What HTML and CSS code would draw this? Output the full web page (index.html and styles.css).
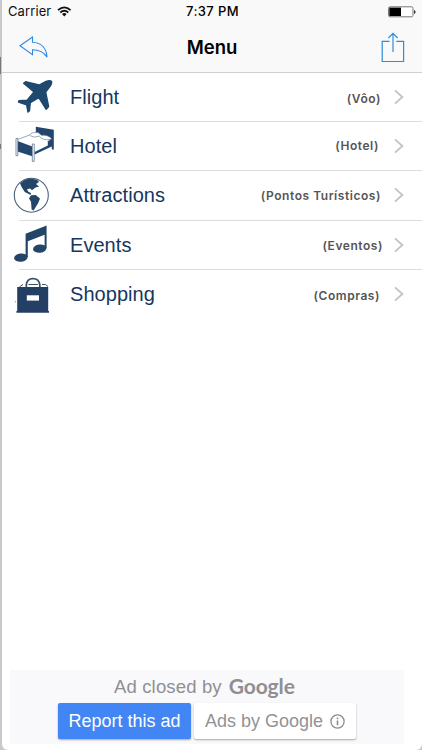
FILE: index.html
```html
<!DOCTYPE html>
<html lang="en">
<head>
<meta charset="utf-8">
<title>Menu</title>
<link rel="stylesheet" href="styles.css">
</head>
<body>
<div class="screen">
  <header class="header">
    <div class="status">
      <div class="carrier"><span class="carrier-name">Carrier</span>
        <svg width="15" height="11" viewBox="0 0 15 11"><g fill="none" stroke="#111" stroke-width="1.8"><path d="M1 4.2Q7.3-1.4 13.6 4.2M3.3 6.5Q7.3 3 11.3 6.5"/></g><path d="M5 8Q7.3 6.2 9.6 8L7.3 10.4Z" fill="#111"/></svg>
      </div>
      <div class="time">7:37 PM</div>
      <svg class="battery" width="28" height="12" viewBox="0 0 28 12"><rect x=".5" y=".8" width="24.5" height="10" rx="1.6" fill="#fff" stroke="#777"/><path d="M1.3 1.6H13V10H1.3Z" fill="#000"/><path d="M26 4V8Q27.6 7.5 27.6 6T26 4Z" fill="#333"/></svg>
    </div>
    <nav class="nav">
      <svg class="back" width="30" height="23" viewBox="0 0 30 23"><path d="M1 9.7 13.5 1V6.2C22 6.6 27.5 12 28 21.3 24.5 15.5 20 13.8 13.5 13.8V18.6Z" fill="none" stroke="#2d8be0" stroke-width="1.1"/></svg>
      <h1 class="title">Menu</h1>
      <svg class="share" width="24" height="31" viewBox="0 0 24 31"><path d="M8.5 9.3H1.2V29.5H22.6V9.3H15.3M12 20V1.3M7.4 6 12 1.3 16.6 6" fill="none" stroke="#2d8be0" stroke-width="1.2"/></svg>
    </nav>
  </header>
  <main class="list">
    <a class="row flight">
      <svg class="icon" viewBox="2 73 60 49"><path d="M23.6 83.2 25.6 81.8 39 85 46 81.4Q50 80.2 51.5 81.4 52.2 83.6 49.5 87L45.7 92.2 48.6 106.5 46.2 109.3 38.8 97.7 30.3 102.7 29.5 110.7 28 112 26.6 104.8 18.5 102 19 100.6 27.2 100.2 34 92Z" fill="#1f486f" stroke="#1f486f" stroke-width="1.4" stroke-linejoin="round"/></svg>
      <span class="name">Flight</span><span class="local">(Vôo)</span>
      <svg class="chevron" viewBox="0 0 10 16"><path d="M1 1.3 8.4 8 1 14.7"/></svg>
    </a>
    <a class="row hotel">
      <svg class="icon" viewBox="2 122 60 49"><path d="M35.8 126.8 53.8 129.7V149.5H51.8V146.5L34.5 154.5V150L47 143.5V140L35.8 134Z" fill="#24466d"/><path d="M17.5 140 29.3 135.2Q31 132 38 132.6L41.5 135.3Q48 134.5 51.5 138.8L47.8 141.5V145.5L34.6 152V147Z" fill="#fff"/><path d="M17.5 139.5 29.3 135.2Q31 132 38 132.6L41.5 135.3Q48 134.5 51.5 138.8L47.6 141.5M29.8 135.5Q34 138.6 39.5 136M39.5 136.5Q43 140.5 50 139.5" fill="none" stroke="#71849a" stroke-width=".7"/><path d="M17.5 141 32.3 146.5V156.3L17.5 151.5Z" fill="#24466d"/><path d="M16 138.5H17.8V155.7H16ZM32.3 144H34.2V161.4H32.3Z" fill="#fff" stroke="#4b6583" stroke-width=".7"/></svg>
      <span class="name">Hotel</span><span class="local">(Hotel)</span>
      <svg class="chevron" viewBox="0 0 10 16"><path d="M1 1.3 8.4 8 1 14.7"/></svg>
    </a>
    <a class="row attractions">
      <svg class="icon" viewBox="2 171 60 50"><circle cx="31.3" cy="195.2" r="17" fill="#fff" stroke="#4b627c" stroke-width="1.1"/><path d="M20 183.4Q24 179 31 178.5L37 179.7 39 182 36 184 39 186.6 35.5 187.6 32 190.3 30.2 188.5 27 189.2 28.3 191.8 31 193 30.7 195 24.8 192 21.9 187.6ZM31 195.3 35.6 195 40 198.4 38.2 203 33.6 210.4 31.6 209.5 31 201.8 29 198.6Z" fill="#234668"/></svg>
      <span class="name">Attractions</span><span class="local">(Pontos Turísticos)</span>
      <svg class="chevron" viewBox="0 0 10 16"><path d="M1 1.3 8.4 8 1 14.7"/></svg>
    </a>
    <a class="row events">
      <svg class="icon" viewBox="2 221 60 49"><g fill="#234668"><path d="M25.6 233.7 46.6 225.4V248H44.6V234.8L27.8 241.2V257H25.6Z"/><ellipse cx="20.9" cy="257.6" rx="6.8" ry="4.1" transform="rotate(-7 20.9 257.6)"/><ellipse cx="39.8" cy="248.6" rx="6.8" ry="4.1" transform="rotate(-7 39.8 248.6)"/></g></svg>
      <span class="name">Events</span><span class="local">(Eventos)</span>
      <svg class="chevron" viewBox="0 0 10 16"><path d="M1 1.3 8.4 8 1 14.7"/></svg>
    </a>
    <a class="row shopping">
      <svg class="icon" viewBox="2 270 60 49"><path d="M26.3 288V284.8Q27 278.6 33 278.5 39 278.6 39.8 284.8V288" fill="none" stroke="#37506b" stroke-width="1.7"/><path d="M19.5 286.8 23 284.5M28.5 284.5H38M42 284.5H45.5L48 286.5" fill="none" stroke="#37506b"/><path d="M17.2 287H48.2V311H49V312.7H16.4V311H17.2Z" fill="#234064"/><path d="M26.8 295.3H39V300.6H26.8Z" fill="#fff"/><path d="M15 301.3H16V302.3H15Z" fill="#70849a"/></svg>
      <span class="name">Shopping</span><span class="local">(Compras)</span>
      <svg class="chevron" viewBox="0 0 10 16"><path d="M1 1.3 8.4 8 1 14.7"/></svg>
    </a>
  </main>
  <footer class="ad">
    <div class="closed"><span class="closed-by">Ad closed by</span><span class="google">Google</span></div>
    <div class="buttons">
      <button class="report"><span>Report this ad</span></button>
      <button class="ads"><span>Ads by Google</span>
        <svg width="15" height="15" viewBox="0 0 15 15"><circle cx="7.5" cy="7.5" r="6.6" fill="none" stroke="#8c8c90" stroke-width="1.3"/><path d="M7.5 6.6V11.3M7.5 3.6V5.2" stroke="#8c8c90" stroke-width="1.6"/></svg>
      </button>
    </div>
  </footer>
</div>
</body>
</html>
```
FILE: styles.css
```css
* { box-sizing: border-box; }
body {
  margin: 0;
  height: 750px;
  overflow: hidden;
  padding-left: 2px;
  background: linear-gradient(#777 0 0) 0 57px / 1px 17px no-repeat,
              linear-gradient(#777 0 0) 0 144px / 1px 5px no-repeat, #c9c9cb;
  font-family: "Liberation Sans", Arial, sans-serif;
}
svg { display: block; flex: none; }
.screen {
  height: 750px;
  display: flex;
  flex-direction: column;
  background: #fff;
  border-radius: 0 0 6px 6px;
  overflow: hidden;
}
.header { height: 73px; background: #f9f9f9; border-bottom: 1px solid #cfcfd1; }
.status {
  height: 23px;
  display: grid;
  grid-template-columns: 1fr auto 1fr;
  align-items: center;
  padding: 0 6px;
  font: 13px/23px Inter, sans-serif;
  color: #111;
}
.carrier { display: flex; align-items: center; gap: 6px; }
.carrier-name { letter-spacing: .1px; }
.time { font-weight: 500; letter-spacing: .4px; color: #000; padding-left: 1px; }
.battery { justify-self: end; }
.nav {
  height: 48px;
  display: grid;
  grid-template-columns: 1fr auto 1fr;
  align-items: center;
  padding: 0 17px 0 17px;
}
.title { margin: 0; font: 600 18.5px/48px Inter, sans-serif; color: #000; }
.share { justify-self: end; }
.row { display: flex; align-items: center; height: 49px; position: relative; }
.attractions { height: 50px; }
.row::after {
  content: "";
  position: absolute;
  left: 17px;
  right: 0;
  bottom: 0;
  border-bottom: 1px solid #dcdcde;
}
.shopping::after { display: none; }
.icon { width: 60px; height: 100%; margin-right: 8px; }
.name { font-size: 20px; line-height: 44px; color: #15375f; letter-spacing: .05px; padding-bottom: 2px; }
.local {
  margin-left: auto;
  margin-right: 13px;
  font: 600 12px/18px Inter, sans-serif;
  letter-spacing: .55px;
  color: #555;
}
.flight .local { padding-top: 2px; }
.hotel .local { margin-right: 15px; padding-bottom: 1px; }
.events .local { margin-right: 11px; }
.shopping .local { margin-right: 14px; padding-top: 2px; }
.chevron { width: 10px; height: 16px; margin: 0 18px 2px 0; }
.chevron path { fill: none; stroke: #c2c2c7; stroke-width: 1.8; }
.ad {
  width: 394px;
  height: 74px;
  margin: auto 0 6px 8px;
  background: #f9f9fb;
  color: #8f8f93;
}
.closed {
  height: 33px;
  display: flex;
  padding-left: 104px;
  gap: 7px;
  align-items: center;
  font-size: 18.5px;
}
.closed-by { letter-spacing: .15px; }
.google { font: 700 21px/32px Lato, sans-serif; letter-spacing: -.1px; padding-bottom: 2px; }
.buttons { display: flex; gap: 3px; padding-left: 48px; }
button {
  height: 36px;
  border: 0;
  border-radius: 2px;
  padding: 0;
  display: flex;
  justify-content: center;
  align-items: center;
  font: 18px/36px "Liberation Sans", Arial, sans-serif;
  white-space: nowrap;
  box-shadow: 0 1px 2px #0005;
}
.report { width: 133px; background: #4285f4; color: #fff; }
.ads { width: 162px; gap: 7px; background: #fff; color: #929296; }
```
